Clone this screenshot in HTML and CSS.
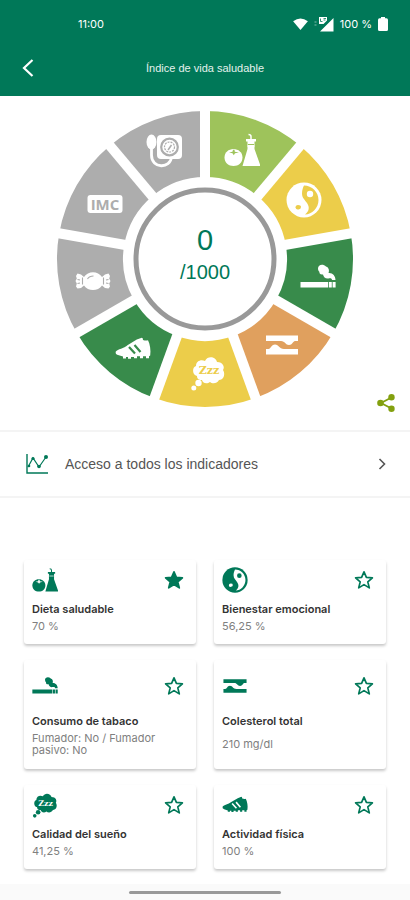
FILE: index.html
```html
<!DOCTYPE html>
<html lang="es">
<head>
<meta charset="utf-8">
<meta name="viewport" content="width=device-width, initial-scale=1">
<title>Índice de vida saludable</title>
<link rel="stylesheet" href="styles.css">
</head>
<body>
<svg class="sprite" aria-hidden="true">
  <symbol id="i-diet" viewBox="0 0 36 36">
    <path d="M9.500 17c-5 0-9 3.500-9 8.500s4 8.500 9 8.500 9-3.500 9-8.500-4-8.500-9-8.500z" fill="currentColor"/>
    <path d="M5 20.500l3.500-.8.500-2h1.500l.3 2 4.200.8-4 .8-1.200 2-1.300-2z" fill="var(--cut)"/>
    <path d="M22 7h10v2.500h-1.500V17l6 17H18.500l5-17V9.500H22z" fill="currentColor"/>
    <path d="M27 7V4.500q0-2-2.500-2M23.500 14h7" fill="none" stroke="currentColor" stroke-width="1.500"/>
    <path d="M24 12.500h6" stroke="var(--cut)" stroke-width="1"/>
  </symbol>
  <symbol id="i-yin" viewBox="0 0 36 36">
    <circle cx="18" cy="18" r="17.500" fill="currentColor"/>
    <path d="M18 3.500c8 0 14.500 6.500 14.500 14.500S26 32.500 19 32.500c4-3 5-7 2-11.500-2-3-5-5-5-9.500 0-3.500 1-6 2-8z" fill="var(--cut)"/>
    <circle cx="24" cy="12" r="3.200" fill="currentColor"/>
    <path d="M9.500 25.500q0-2.500 2.500-2.500 3 0 3 2t-2.500 2.500-3-2z" fill="var(--cut)"/>
  </symbol>
  <symbol id="i-smoke" viewBox="0 0 36 36">
    <path d="M.500 23H28v5.500H.500zM28.800 23h3v5.500h-3zM32.600 23h3v5.500h-3z" fill="currentColor"/>
    <path d="M18 9.500c0-4 5-5 8-2 3 .8 3.500 4.500 2.500 6.500 4-.5 7 3 7 7h-3.500c0-1.500-1.500-2-3.500-1.500-3 .5-5-1.500-5.500-4-3 .5-4-1.500-3.500-2.500-1-.8-1.500-2-1.500-3.500z" fill="currentColor"/>
  </symbol>
  <symbol id="i-artery" viewBox="0 0 36 36">
    <path d="M2 8.500h32v5.500h-3c-2 0-2.500 4-6 4s-4-4-8-4H2zM2 27.500h32V22H20c-5 0-5-4.500-9-4.500S7 22 4.500 22H2z" fill="currentColor"/>
  </symbol>
  <symbol id="i-sleep" viewBox="0 0 36 36">
    <path d="M7 21c-5-1-5-9-1-10 0-5 5-7 9-5 3-6 11-4 12 1 6 0 8 5 6 8 3 5 0 10-4 10-2 4-7 4-9 2-4 3-8 0-8-2-4 0-5-2-5-4z" fill="currentColor"/>
    <circle cx="8.500" cy="28" r="3.200" fill="currentColor"/>
    <circle cx="3.800" cy="33" r="2.500" fill="currentColor"/>
    <text class="zzz" x="19" y="19" text-anchor="middle">Zzz</text>
  </symbol>
  <symbol id="i-shoe" viewBox="0 0 36 36">
    <path d="M.800 20.500c2-2.500 8-3 12-6.500l9-5.500 5-1.800q1.200 0 1.200 2.300 3 1 5 .2c2 4 3 10 2.200 15.300l-1.200.8v2H31v-2h-3v2h-3v-2h-3v2h-3V26h-3v1.800h-3V26h-2v1.500H8V25.500l-5-1.500q-3-1-2.200-3.500z" fill="currentColor"/>
    <path d="M14 16l6 6.500M19.500 14l6 7" stroke="var(--cut)" stroke-width="2.200" fill="none"/>
  </symbol>
  <symbol id="i-candy" viewBox="0 0 36 36">
    <path d="M9 14c4-6.500 14-6.500 18 0l3-2.500 3.500-1L35 13l-.8 2.500 1.300 2.500-1.300 2.500.8 3-1.500 2-3.500-.5-3-2.500c-4 6-14 6-18 0l-3 2.500-3.500.5-1.500-2 .8-3L.500 18l1.300-2.500L1 13l1.500-2.500 3.500 1z" fill="currentColor"/>
    <path d="M12.500 16c1.500-2.500 4-3 6-3M7.500 14.500v7M28.500 14.500v7M2.500 16.500l2.500.5M2.500 20.500l2.500-.5M33.500 16.500L31 17M33.500 20.500L31 20" fill="none" stroke="var(--cut)" stroke-width="1.100"/>
  </symbol>
  <symbol id="i-bmi" viewBox="0 0 36 36">
    <rect x=".500" y="9" width="35" height="18" rx="3" fill="currentColor"/>
    <text class="bmi" x="18" y="23.500" text-anchor="middle">IMC</text>
  </symbol>
  <symbol id="i-pressure" viewBox="0 0 36 36">
    <rect x="11" y="2" width="25" height="24" rx="4" fill="currentColor"/>
    <ellipse cx="5.500" cy="9" rx="5" ry="7.500" fill="currentColor"/>
    <path d="M5.500 15v7c0 14 19 14 20 2" fill="none" stroke="currentColor" stroke-width="2.800"/>
    <circle cx="23.500" cy="14" r="8.300" fill="none" stroke="var(--cut)" stroke-width="2.200"/>
    <circle cx="23.500" cy="14" r="5" fill="none" stroke="var(--cut)" stroke-width="1.200" stroke-dasharray="2 1"/>
    <path d="M22 17l3.500-5" stroke="var(--cut)" stroke-width="1.500"/>
  </symbol>
  <symbol id="i-star" viewBox="0 0 20 20">
    <path d="M10 1.800l2.400 5.600 6 .5-4.600 4 1.500 6-5.300-3.300-5.300 3.300 1.500-6-4.600-4 6-.5z" stroke="currentColor" stroke-width="1.700" stroke-linejoin="round"/>
  </symbol>
</svg>

<header class="top">
  <div class="status">
    <span>11:00</span>
    <div class="status-right">
      <svg class="wifi" viewBox="0 0 16 13" aria-hidden="true"><path d="M0 3.500Q8-2.500 16 3.500L8 13z" fill="currentColor"/></svg>
      <svg class="signal" viewBox="0 0 20 15" aria-hidden="true"><path d="M19.500 1v13.500H6zM5 0h8v3.500L9.500 7H5z" fill="currentColor"/><path d="M6.500 1.500v3h2M9.500 1.500h2.500M9.500 3h2" stroke="#007858" stroke-width=".8" fill="none"/><path d="M.500 5h2M.500 8h2" stroke="currentColor" stroke-opacity=".5"/></svg>
      <span>100 %</span>
      <svg class="battery" viewBox="0 0 10 14" aria-hidden="true"><path d="M3 0h4v1.200h1.500Q10 1.200 10 3v9.500q0 1.500-1.500 1.500h-7Q0 14 0 12.500V3q0-1.800 1.500-1.800H3z" fill="currentColor"/></svg>
    </div>
  </div>
  <div class="nav">
    <button class="back" type="button" aria-label="Atrás"><svg viewBox="0 0 12 18" aria-hidden="true"><path d="M10.500 1L2 9l8.500 8" fill="none" stroke="currentColor" stroke-width="2.200"/></svg></button>
    <h1>Índice de vida saludable</h1>
  </div>
</header>

<main>
  <section class="score">
    <svg class="wheel" viewBox="0 0 300 300" role="img" aria-label="0 de 1000">
      <g class="slices" transform="rotate(-90 150 150)">
        <circle class="lime" cx="150" cy="150" r="115" pathLength="360"/>
        <circle class="yellow" cx="150" cy="150" r="115" pathLength="360" transform="rotate(40 150 150)"/>
        <circle class="green" cx="150" cy="150" r="115" pathLength="360" transform="rotate(80 150 150)"/>
        <circle class="orange" cx="150" cy="150" r="115" pathLength="360" transform="rotate(120 150 150)"/>
        <circle class="yellow" cx="150" cy="150" r="115" pathLength="360" transform="rotate(160 150 150)"/>
        <circle class="green" cx="150" cy="150" r="115" pathLength="360" transform="rotate(200 150 150)"/>
        <circle class="gray" cx="150" cy="150" r="115" pathLength="360" transform="rotate(240 150 150)"/>
        <circle class="gray" cx="150" cy="150" r="115" pathLength="360" transform="rotate(280 150 150)"/>
        <circle class="gray" cx="150" cy="150" r="115" pathLength="360" transform="rotate(320 150 150)"/>
      </g>
      <g class="gaps">
        <path d="M150 75V0"/>
        <path d="M150 75V0" transform="rotate(40 150 150)"/>
        <path d="M150 75V0" transform="rotate(80 150 150)"/>
        <path d="M150 75V0" transform="rotate(120 150 150)"/>
        <path d="M150 75V0" transform="rotate(160 150 150)"/>
        <path d="M150 75V0" transform="rotate(200 150 150)"/>
        <path d="M150 75V0" transform="rotate(240 150 150)"/>
        <path d="M150 75V0" transform="rotate(280 150 150)"/>
        <path d="M150 75V0" transform="rotate(320 150 150)"/>
      </g>
      <circle class="ring" cx="150" cy="150" r="69"/>
      <text class="points" x="150" y="141" text-anchor="middle">0</text>
      <text class="total" x="150" y="170" text-anchor="middle">/1000</text>
      <g class="marks">
        <use class="on-lime" href="#i-diet" x="169" y="23" width="36" height="36"/>
        <use class="on-yellow" href="#i-yin" x="231" y="73" width="36" height="36"/>
        <use class="on-green" href="#i-smoke" x="245" y="150" width="36" height="36"/>
        <use class="on-orange" href="#i-artery" x="209" y="218" width="36" height="36"/>
        <use class="on-yellow" href="#i-sleep" x="135" y="246" width="36" height="36"/>
        <use class="on-green" href="#i-shoe" x="60" y="222" width="36" height="36"/>
        <use class="on-gray" href="#i-candy" x="20" y="154" width="36" height="36"/>
        <use class="on-gray" href="#i-bmi" x="32" y="77" width="36" height="36"/>
        <use class="on-gray" href="#i-pressure" x="91" y="24" width="36" height="36"/>
      </g>
    </svg>
    <button class="share" type="button" aria-label="Compartir"><svg viewBox="0 0 18 18" aria-hidden="true"><path d="M14.500 3.500L4 9l10.500 5.500" fill="none" stroke="currentColor" stroke-width="1.800"/><circle cx="3.500" cy="9" r="3.300" fill="currentColor"/><circle cx="14.500" cy="3.300" r="3.200" fill="currentColor"/><circle cx="14.500" cy="14.700" r="3.200" fill="currentColor"/></svg></button>
  </section>

  <a class="access" href="#indicadores">
    <svg class="chart" viewBox="0 0 24 22" aria-hidden="true"><path d="M2 1v19h21" fill="none" stroke="currentColor" stroke-width="1.400"/><path d="M3 14l5-9 6 9 7-10" fill="none" stroke="currentColor" stroke-width="1.200"/><circle cx="8" cy="5.500" r="1.600" fill="currentColor"/><circle cx="14" cy="13.500" r="1.800" fill="currentColor"/><circle cx="21" cy="4" r="2" fill="currentColor"/><circle cx="4" cy="13" r="1.300" fill="currentColor"/></svg>
    <span>Acceso a todos los indicadores</span>
    <svg class="chevron" viewBox="0 0 8 12" aria-hidden="true"><path d="M1.500 1l5 5-5 5" fill="none" stroke="currentColor" stroke-width="1.600"/></svg>
  </a>

  <section class="cards" id="indicadores">
    <article class="card">
      <div class="card-top"><svg class="icon" aria-hidden="true"><use href="#i-diet"/></svg><button class="star star-on" type="button" aria-label="Quitar de favoritos"><svg aria-hidden="true"><use href="#i-star"/></svg></button></div>
      <h2>Dieta saludable</h2>
      <p>70 %</p>
    </article>
    <article class="card">
      <div class="card-top"><svg class="icon" aria-hidden="true"><use href="#i-yin"/></svg><button class="star" type="button" aria-label="Añadir a favoritos"><svg aria-hidden="true"><use href="#i-star"/></svg></button></div>
      <h2>Bienestar emocional</h2>
      <p>56,25 %</p>
    </article>
    <article class="card card-tall">
      <div class="card-top"><svg class="icon" aria-hidden="true"><use href="#i-smoke"/></svg><button class="star" type="button" aria-label="Añadir a favoritos"><svg aria-hidden="true"><use href="#i-star"/></svg></button></div>
      <h2>Consumo de tabaco</h2>
      <p>Fumador: No / Fumador pasivo: No</p>
    </article>
    <article class="card card-tall">
      <div class="card-top"><svg class="icon" aria-hidden="true"><use href="#i-artery"/></svg><button class="star" type="button" aria-label="Añadir a favoritos"><svg aria-hidden="true"><use href="#i-star"/></svg></button></div>
      <h2>Colesterol total</h2>
      <p>210 mg/dl</p>
    </article>
    <article class="card">
      <div class="card-top"><svg class="icon" aria-hidden="true"><use href="#i-sleep"/></svg><button class="star" type="button" aria-label="Añadir a favoritos"><svg aria-hidden="true"><use href="#i-star"/></svg></button></div>
      <h2>Calidad del sueño</h2>
      <p>41,25 %</p>
    </article>
    <article class="card">
      <div class="card-top"><svg class="icon" aria-hidden="true"><use href="#i-shoe"/></svg><button class="star" type="button" aria-label="Añadir a favoritos"><svg aria-hidden="true"><use href="#i-star"/></svg></button></div>
      <h2>Actividad física</h2>
      <p>100 %</p>
    </article>
  </section>
</main>
<footer class="home"><span class="pill"></span></footer>
</body>
</html>
```
FILE: styles.css
```css
:root {
  --brand: #007858;
  --lime: #9ec35b;
  --yellow: #eccd4a;
  --green: #388b4b;
  --orange: #e0a05e;
  --gray: #adadad;
}

* { box-sizing: border-box; }

body {
  margin: 0;
  min-height: 100vh;
  display: flex;
  flex-direction: column;
  background: #fff;
  font-family: Inter, "Liberation Sans", sans-serif;
}

h1, h2, p { margin: 0; }

button {
  padding: 0;
  border: 0;
  background: none;
  color: inherit;
  display: flex;
}

.sprite { display: none; }

.top {
  background: var(--brand);
  color: #fff;
}

.status {
  display: flex;
  justify-content: space-between;
  align-items: center;
  height: 48px;
  padding: 0 22px 0 78px;
  font-size: 11px;
}

.status-right {
  display: flex;
  align-items: center;
  gap: 6px;
}

.wifi { width: 15px; height: 12px; }
.signal { width: 20px; height: 15px; }
.battery { width: 10px; height: 14px; }

.nav {
  display: grid;
  grid-template-columns: 48px 1fr 48px;
  align-items: center;
  height: 48px;
  padding-bottom: 8px;
}

.back { justify-content: center; padding-left: 8px; }
.back svg { width: 12px; height: 18px; }

h1 {
  color: #e4f2ed;
  text-align: center;
  font: 400 11px "Liberation Sans", sans-serif;
}

.score {
  display: grid;
  padding: 13px 15px 18px;
}

.wheel {
  grid-area: 1 / 1;
  justify-self: center;
  width: 300px;
  max-width: 100%;
  margin-bottom: 3px;
}

.share {
  grid-area: 1 / 1;
  align-self: end;
  justify-self: end;
  color: #83a00f;
}

.share svg { width: 18px; height: 18px; }

.slices circle {
  fill: none;
  stroke-width: 66;
  stroke-dasharray: 40 320;
}

.slices .lime { stroke: var(--lime); }
.slices .yellow { stroke: var(--yellow); }
.slices .green { stroke: var(--green); }
.slices .orange { stroke: var(--orange); }
.slices .gray { stroke: var(--gray); }

.gaps path { stroke: #fff; stroke-width: 10; }

.ring { fill: #fff; stroke: #999; stroke-width: 5; }

.points, .total {
  fill: var(--brand);
  font-family: "Liberation Sans", sans-serif;
}

.points { font-size: 29px; }
.total { font-size: 20px; }

.marks { color: #fff; }
.on-lime { --cut: var(--lime); }
.on-yellow { --cut: var(--yellow); }
.on-green { --cut: var(--green); }
.on-orange { --cut: var(--orange); }
.on-gray { --cut: var(--gray); }

.zzz {
  fill: var(--cut);
  font: 700 11px "DejaVu Serif", serif;
}

.bmi {
  fill: var(--cut);
  font: 700 15px "Open Sans", sans-serif;
}

.access {
  display: flex;
  align-items: center;
  height: 68px;
  padding: 0 24px 0 25px;
  border-top: 2px solid #f4f4f4;
  border-bottom: 2px solid #f4f4f4;
  color: #555;
  font: 14px "Liberation Sans", sans-serif;
  text-decoration: none;
}

.access span { flex: 1; padding-left: 16px; }
.chart { width: 24px; height: 22px; color: var(--brand); }
.chevron { width: 8px; height: 12px; }

.cards {
  display: grid;
  grid-template-columns: 1fr 1fr;
  gap: 16px 18px;
  padding: 62px 24px 15px;
}

.card {
  --cut: #fff;
  padding: 7px 8px 12px;
  border-radius: 3px;
  box-shadow: 0 2px 3px rgba(0, 0, 0, .22);
  color: var(--brand);
}

.card-top {
  display: flex;
  justify-content: space-between;
  align-items: center;
  margin-bottom: 8px;
}

.icon { width: 26px; height: 26px; }

.star { padding-right: 4px; fill: none; }
.star-on { fill: currentColor; }
.star svg { width: 20px; height: 20px; }

h2 {
  color: #333;
  font-size: 11px;
  font-weight: 600;
  line-height: 16px;
}

.card p {
  margin-top: 3px;
  color: #808080;
  font-size: 11px;
  line-height: 12px;
}

.card-tall { padding: 13px 8px; }
.card-tall .card-top { margin-bottom: 14px; }
.card-tall p {
  display: flex;
  align-items: center;
  min-height: 24px;
}

.home {
  display: flex;
  justify-content: center;
  align-items: center;
  height: 16px;
  margin-top: auto;
  background: #fafafa;
}

.pill {
  width: 37%;
  height: 3px;
  border-radius: 2px;
  background: #999;
}
```
